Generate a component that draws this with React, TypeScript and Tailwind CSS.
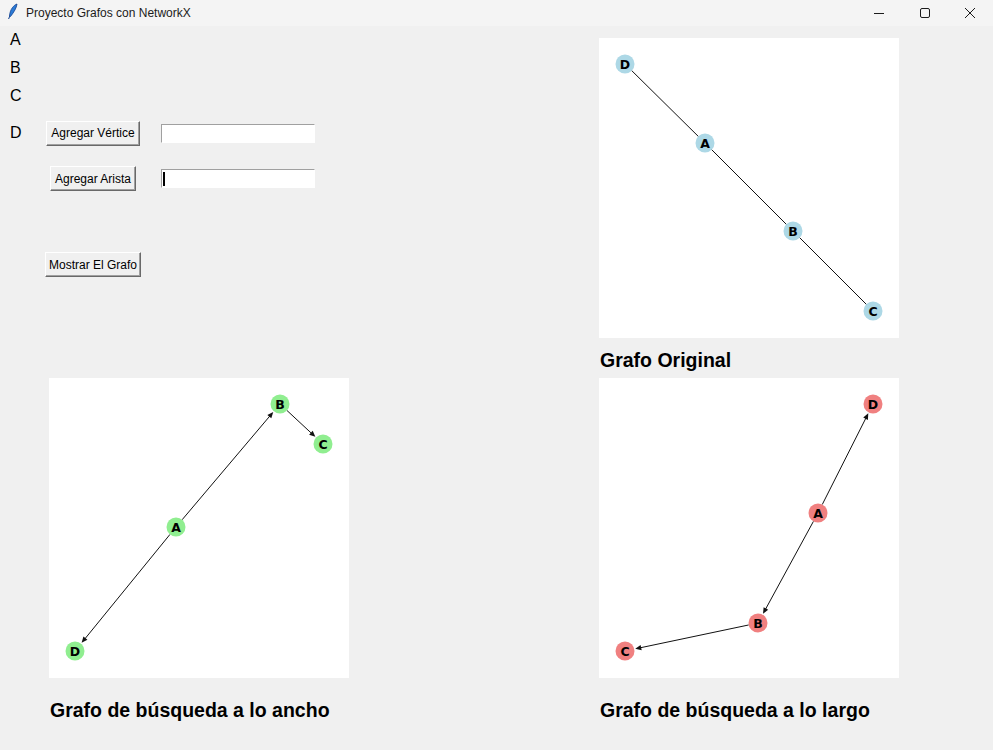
import React from "react";

type Pt = { id: string; x: number; y: number };

const R = 9.5;

function Graph({
  nodes,
  edges,
  color,
  directed,
}: {
  nodes: Pt[];
  edges: [string, string][];
  color: string;
  directed: boolean;
}) {
  const byId: Record<string, Pt> = {};
  nodes.forEach((n) => (byId[n.id] = n));
  return (
    <svg width="300" height="300" className="block bg-white">
      {edges.map(([a, b]) => {
        const s = byId[a];
        const t = byId[b];
        const dx = t.x - s.x;
        const dy = t.y - s.y;
        const len = Math.hypot(dx, dy);
        const ux = dx / len;
        const uy = dy / len;
        const sx = s.x + ux * R;
        const sy = s.y + uy * R;
        const tx = t.x - ux * (R + 1);
        const ty = t.y - uy * (R + 1);
        const hl = 6;
        const hw = 2.6;
        const bx = tx - ux * hl;
        const by = ty - uy * hl;
        if (!directed) {
          return (
            <line key={a + b} x1={s.x} y1={s.y} x2={t.x} y2={t.y} stroke="#111" strokeWidth="1" />
          );
        }
        return (
          <g key={a + b}>
            <line x1={sx} y1={sy} x2={bx + ux} y2={by + uy} stroke="#111" strokeWidth="1" />
            <polygon
              points={`${tx},${ty} ${bx - uy * hw},${by + ux * hw} ${bx + uy * hw},${by - ux * hw}`}
              fill="#111"
            />
          </g>
        );
      })}
      {nodes.map((n) => (
        <g key={n.id}>
          <circle cx={n.x} cy={n.y} r={R} fill={color} />
          <text
            x={n.x}
            y={n.y + 4.5}
            textAnchor="middle"
            fontSize="12.5"
            fontWeight="bold"
            fontFamily="'DejaVu Sans', sans-serif"
            fill="#000"
          >
            {n.id}
          </text>
        </g>
      ))}
    </svg>
  );
}

function TkButton({ label, w }: { label: string; w: string }) {
  return (
    <button
      className={`${w} h-[25px] bg-[#f0f0f0] border border-t-white border-l-white border-r-[#696969] border-b-[#696969] shadow-[inset_-1px_-1px_0_#a0a0a0] text-[12px] text-black flex items-center justify-center`}
      style={{ fontFamily: "'Liberation Sans', Arial, sans-serif" }}
    >
      {label}
    </button>
  );
}

function TkEntry({ cursor }: { cursor?: boolean }) {
  return (
    <div className="w-[154px] h-[19px] bg-white border-t border-l border-t-[#a0a0a0] border-l-[#a0a0a0] border-b border-r border-b-white border-r-white relative">
      {cursor && <span className="absolute left-[1px] top-[2px] w-[2px] h-[14px] bg-black" />}
    </div>
  );
}

const original: Pt[] = [
  { id: "D", x: 26, y: 26 },
  { id: "A", x: 106, y: 105 },
  { id: "B", x: 194, y: 193 },
  { id: "C", x: 274, y: 273 },
];
const bfs: Pt[] = [
  { id: "B", x: 231, y: 26 },
  { id: "C", x: 274, y: 66 },
  { id: "A", x: 127, y: 149 },
  { id: "D", x: 26, y: 273 },
];
const dfs: Pt[] = [
  { id: "D", x: 274, y: 26 },
  { id: "A", x: 219, y: 135 },
  { id: "B", x: 159, y: 245 },
  { id: "C", x: 26, y: 273 },
];

export default function App() {
  const sans = { fontFamily: "'Liberation Sans', Arial, sans-serif" };
  return (
    <main className="w-[993px] h-[750px] bg-[#f0f0f0] overflow-hidden" style={sans}>
      {/* title bar */}
      <div className="h-[26px] bg-[#f4f4f4] flex items-center">
        <svg width="26" height="26" viewBox="0 0 26 26" className="shrink-0">
          <path d="M17 4 C14 5 10 9 9.5 16 L10.5 16.5 C14 12 16.5 8 17 4 Z" fill="#2b7bd6" stroke="#0f3f8f" strokeWidth="0.8" />
          <line x1="9.8" y1="16" x2="8.6" y2="19" stroke="#0f3f8f" strokeWidth="1" />
        </svg>
        <span className="text-[12px] text-[#1b1b1b]">Proyecto Grafos con NetworkX</span>
        <div className="ml-auto flex h-full">
          <div className="w-[46px] flex items-center justify-center">
            <svg width="12" height="12"><line x1="1" y1="6.5" x2="11" y2="6.5" stroke="#1b1b1b" /></svg>
          </div>
          <div className="w-[45px] flex items-center justify-center">
            <svg width="12" height="12"><rect x="1.5" y="1.5" width="9" height="9" rx="1.5" fill="none" stroke="#1b1b1b" /></svg>
          </div>
          <div className="w-[46px] flex items-center justify-center">
            <svg width="12" height="12"><path d="M1 1 L11 11 M11 1 L1 11" stroke="#1b1b1b" /></svg>
          </div>
        </div>
      </div>

      {/* top section */}
      <div className="flex">
        <div className="w-[599px] text-black">
          <div className="h-[28px] leading-[28px] pl-[10px] text-[16px]">A</div>
          <div className="h-[28px] leading-[28px] pl-[10px] text-[16px]">B</div>
          <div className="h-[28px] leading-[28px] pl-[10px] text-[16px]">C</div>
          <div className="pt-[9px] flex items-center">
            <div className="w-[46px] pl-[10px] text-[16px] leading-[28px]">D</div>
            <div className="w-[94px] flex justify-center">
              <TkButton label="Agregar Vértice" w="w-[94px]" />
            </div>
            <div className="ml-[21px]">
              <TkEntry />
            </div>
          </div>
          <div className="mt-[19px] flex items-center">
            <div className="w-[46px]" />
            <div className="w-[94px] flex justify-center">
              <TkButton label="Agregar Arista" w="w-[86px]" />
            </div>
            <div className="ml-[21px]">
              <TkEntry cursor />
            </div>
          </div>
          <div className="mt-[61px] flex">
            <div className="w-[45px]" />
            <TkButton label="Mostrar El Grafo" w="w-[96px]" />
          </div>
        </div>
        <div className="pt-[12px]">
          <Graph nodes={original} edges={[["D", "A"], ["A", "B"], ["B", "C"]]} color="#add8e6" directed={false} />
          <div className="mt-[11px] pl-[1px] h-[22px] leading-[22px] text-[19.5px] font-bold text-black">Grafo Original</div>
        </div>
      </div>

      {/* bottom section */}
      <div className="mt-[7px] flex">
        <div className="pl-[49px] w-[599px]">
          <Graph nodes={bfs} edges={[["A", "B"], ["B", "C"], ["A", "D"]]} color="#90ee90" directed />
          <div className="mt-[21px] pl-[1px] h-[22px] leading-[22px] text-[19.5px] font-bold text-black">Grafo de búsqueda a lo ancho</div>
        </div>
        <div>
          <Graph nodes={dfs} edges={[["A", "D"], ["A", "B"], ["B", "C"]]} color="#f08080" directed />
          <div className="mt-[21px] pl-[1px] h-[22px] leading-[22px] text-[19.5px] font-bold text-black">Grafo de búsqueda a lo largo</div>
        </div>
      </div>
    </main>
  );
}
